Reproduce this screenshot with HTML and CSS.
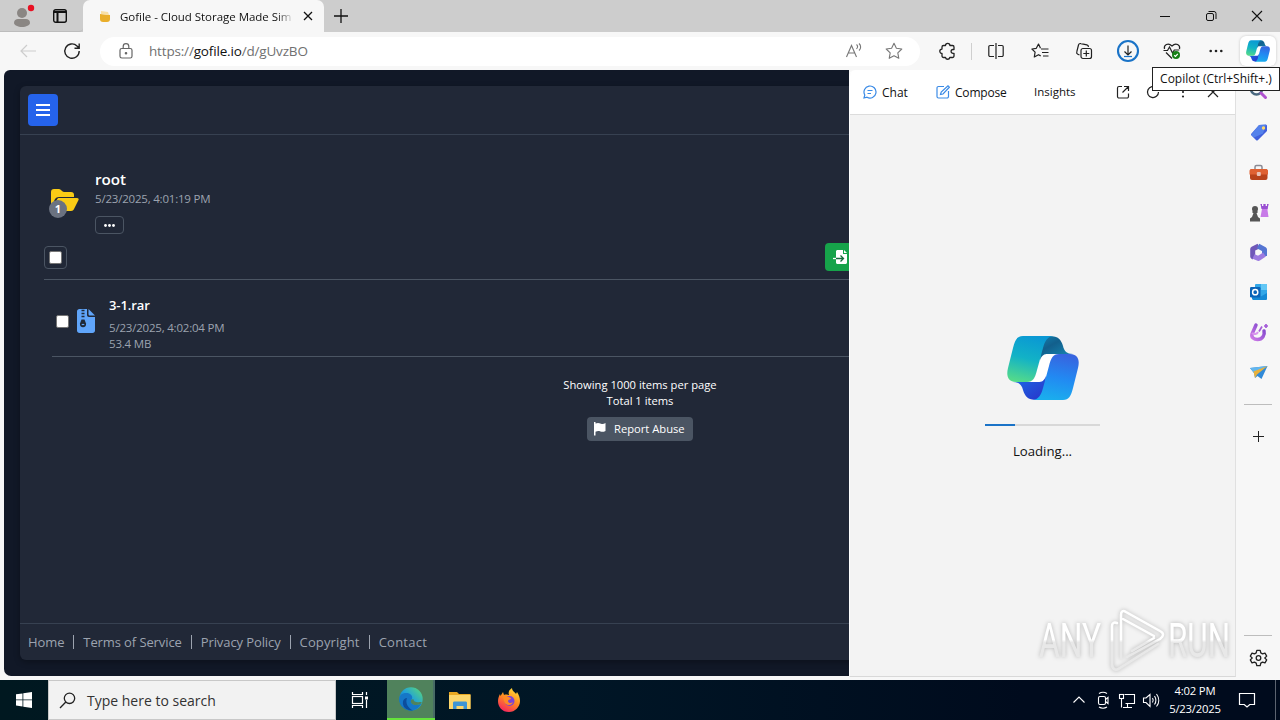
FILE: index.html
```
<!DOCTYPE html>
<html lang="en">
  <head>
    <meta charset="UTF-8" />
    <meta name="viewport" content="width=device-width, initial-scale=1.0" />
    <title>Gofile - Cloud Storage Made Simple</title>
    <link rel="stylesheet" href="styles.css" />
  </head>
  <body>
    <!-- shared gradients and the copilot symbol -->
    <svg class="defs" width="0" height="0">
      <defs>
        <linearGradient id="cp-left" x1="0.6" y1="0" x2="0.35" y2="1">
          <stop offset="0" stop-color="#0a98d4" />
          <stop offset="0.5" stop-color="#12b2c6" />
          <stop offset="1" stop-color="#52d98c" />
        </linearGradient>
        <linearGradient id="cp-right" x1="0.6" y1="0" x2="0.4" y2="1">
          <stop offset="0" stop-color="#3764df" />
          <stop offset="0.5" stop-color="#2289f2" />
          <stop offset="1" stop-color="#1aaeed" />
        </linearGradient>
        <linearGradient id="cp-top" x1="0" y1="0" x2="0.8" y2="1">
          <stop offset="0" stop-color="#1280ae" />
          <stop offset="0.4" stop-color="#125f8c" />
          <stop offset="1" stop-color="#1689b5" />
        </linearGradient>
        <linearGradient id="cp-bottom" x1="0" y1="0" x2="1" y2="1">
          <stop offset="0" stop-color="#1c6de8" />
          <stop offset="1" stop-color="#2932c8" />
        </linearGradient>
        <linearGradient id="violet" x1="0" y1="1" x2="1" y2="0">
          <stop offset="0" stop-color="#d07be8" />
          <stop offset="1" stop-color="#7842c9" />
        </linearGradient>
        <linearGradient id="edge-g" x1="0" y1="1" x2="1" y2="0">
          <stop offset="0" stop-color="#0c59a4" />
          <stop offset="0.5" stop-color="#1f9fdb" />
          <stop offset="1" stop-color="#5fdd71" />
        </linearGradient>
        <linearGradient id="fire" x1="0.8" y1="0" x2="0.3" y2="1">
          <stop offset="0" stop-color="#ffe03a" />
          <stop offset="0.5" stop-color="#ff8b20" />
          <stop offset="1" stop-color="#f5245f" />
        </linearGradient>
        <linearGradient id="mark" gradientUnits="userSpaceOnUse" x1="0" y1="0" x2="0" y2="70">
          <stop offset="0.48" stop-color="#fff" />
          <stop offset="0.52" stop-color="#e8e8e8" />
        </linearGradient>
        <symbol id="copilot" viewBox="0 0 72 64">
          <path fill="#fff" d="M36 17H49C45 20 43 26 42 30L38 46H23C28 44 29 40 30 34Z" />
          <path fill="url(#cp-top)" d="M42 0C52 0 54 4 56 10C57 15 60 18 66 18H41C37 18 35 19 33 24L34 8Z" />
          <path fill="url(#cp-bottom)" d="M30 64C20 64 18 60 16 54C15 49 12 46 6 46H31C35 46 37 45 39 40L38 56Z" />
          <path fill="url(#cp-left)" d="M16 0H46C40 1 38 5 36 12L30 34C28 42 26 46 20 46H9C1 46 -1 40 1 32L6 12C8 4 10 0 16 0Z" />
          <path fill="url(#cp-right)" d="M56 64H26C32 63 34 59 36 52L42 30C44 22 46 18 52 18H63C71 18 73 24 71 32L66 52C64 60 62 64 56 64Z" />
        </symbol>
      </defs>
    </svg>

    <header class="tabbar">
      <div class="tabbar-left">
        <svg class="profile" width="22" height="24" viewBox="0 0 22 24">
          <circle cx="9" cy="10" r="5" fill="#8a8683" />
          <path d="M1 20c0-3 2-4 4-4h8c2 0 4 1 4 4 0 2-4 4-8 4s-8-2-8-4z" fill="#8a8683" />
          <circle cx="18" cy="5" r="3.2" fill="#e81123" />
        </svg>
        <svg width="16" height="16" viewBox="0 0 16 16" fill="none" stroke="#111" stroke-width="1.4">
          <rect x="1.7" y="1.7" width="12.6" height="12.6" rx="2" />
          <path d="M2 4h12M5.5 4v10" stroke-width="2" />
        </svg>
      </div>
      <div class="tab">
        <svg width="12" height="12" viewBox="0 0 12 12">
          <path d="M1 4l10 1v4c0 2-1 3-3 3H4C2 12 1 11 1 9z" fill="#e9ae2b" />
          <path d="M2 1l7 1 1 3-8-1z" fill="#f8dfa4" />
        </svg>
        <span class="tab-title">Gofile - Cloud Storage Made Sim</span>
        <svg width="10" height="10" viewBox="0 0 10 10" stroke="#111" stroke-width="1.3">
          <path d="M1 1l8 8M9 1L1 9" />
        </svg>
      </div>
      <svg class="new-tab" width="14" height="14" viewBox="0 0 14 14" stroke="#111" stroke-width="1.3">
        <path d="M7 0v14M0 7h14" />
      </svg>
      <div class="window-buttons">
        <svg width="46" height="32" viewBox="0 0 46 32" stroke="#111"><path d="M18 16.5h10" /></svg>
        <svg width="46" height="32" viewBox="0 0 46 32" fill="none" stroke="#111">
          <rect x="18.5" y="13.5" width="7" height="7" rx="1.5" />
          <path d="M20.5 11.5H26a2 2 0 0 1 2 2V19" />
        </svg>
        <svg width="46" height="32" viewBox="0 0 46 32" stroke="#111" stroke-width="1.1">
          <path d="M18 11l10 10M28 11L18 21" />
        </svg>
      </div>
    </header>

    <nav class="toolbar">
      <svg class="back" width="16" height="14" viewBox="0 0 16 14" fill="none" stroke="#cdcdcd" stroke-width="1.2">
        <path d="M16 7H1M7 1L1 7l6 6" />
      </svg>
      <svg class="reload" width="18" height="18" viewBox="0 0 18 18" fill="none" stroke="#222" stroke-width="1.4">
        <path d="M16.2 9A7.2 7.2 0 1 1 14 3.9L16 6M16.2 1.5V6.2H11.5" />
      </svg>
      <div class="address">
        <svg width="14" height="16" viewBox="0 0 14 16" fill="none" stroke="#666" stroke-width="1.2">
          <rect x="1" y="5.5" width="12" height="9.5" rx="1.8" />
          <path d="M4.2 5.5V3.5a2.8 2.8 0 0 1 5.6 0v2" />
          <circle cx="7" cy="10.2" r="0.7" fill="#666" />
        </svg>
        <span class="url">https://<b>gofile.io</b>/d/gUvzBO</span>
        <svg class="read" width="18" height="16" viewBox="0 0 18 16" fill="none" stroke="#777" stroke-width="1.1">
          <path d="M1.5 14L6.500 2.500 11.500 14M3.300 10h6.400M11.500 1.500c1.300 1.200 1.300 3 0 4.500M14 .500c2.200 2 2.200 5 0 7" />
        </svg>
        <svg width="18" height="18" viewBox="0 0 18 18" fill="none" stroke="#777" stroke-width="1.1" stroke-linejoin="round">
          <path d="M9 1.300l2.400 5 5.400.7-4 3.800 1 5.500L9 13.700l-4.800 2.600 1-5.500-4-3.800 5.400-.7z" />
        </svg>
      </div>
      <div class="tools">
        <div class="tool">
          <svg width="18" height="18" viewBox="0 0 18 18" fill="none" stroke="#222" stroke-width="1.3" stroke-linejoin="round">
            <path d="M4.500 3.500h2a2.200 2.200 0 0 1 4.400 0h2.600a1.500 1.500 0 0 1 1.500 1.500v2.500h-1a1.800 1.800 0 0 0 0 3.800h1V14a1.500 1.500 0 0 1-1.500 1.500h-2.700a2.200 2.200 0 0 1-4.300 0h-2A1.500 1.500 0 0 1 3 14v-2.500a2.200 2.200 0 0 1 0-4.400V5a1.500 1.500 0 0 1 1.500-1.500z" />
          </svg>
        </div>
        <div class="tool-line"></div>
        <div class="tool">
          <svg width="16" height="16" viewBox="0 0 16 16" fill="none" stroke="#222" stroke-width="1.2">
            <path d="M6 2.500H2a1.200 1.200 0 0 0-1.200 1.200v8.600A1.200 1.200 0 0 0 2 13.500h4M10 2.500h4a1.200 1.200 0 0 1 1.200 1.200v8.600a1.200 1.200 0 0 1-1.200 1.200h-4M8 0v16" />
          </svg>
        </div>
        <div class="tool">
          <svg width="18" height="18" viewBox="0 0 18 18" fill="none" stroke="#222" stroke-width="1.2" stroke-linejoin="round">
            <path d="M9.500 6.300L7.500 2 5.300 6.300.9 7l3.200 3.200-.8 4.800 4.200-2.300 2.200 1.200M10 7h7.500M11 10.500h6.500M12 14h5.500" />
          </svg>
        </div>
        <div class="tool">
          <svg width="18" height="18" viewBox="0 0 18 18" fill="none" stroke="#222" stroke-width="1.2">
            <rect x="6" y="6.500" width="10.500" height="10" rx="2" />
            <path d="M11.300 8.500v6M8.300 11.500h6M4.500 13L2.800 12.200a2 2 0 0 1-1-2.500L3.500 3a2 2 0 0 1 2.400-1.400l6 1.200A2 2 0 0 1 13.400 5" />
          </svg>
        </div>
        <div class="tool">
          <svg width="24" height="24" viewBox="0 0 24 24" fill="none">
            <circle cx="12" cy="12" r="10" stroke="#1a73c7" stroke-width="2.100" />
            <path d="M12 6.500v9M8.500 12.500l3.500 3.500 3.500-3.500" stroke="#222" stroke-width="1.200" />
            <path d="M8 17.500h8" stroke="#1a73c7" stroke-width="1.200" />
          </svg>
        </div>
        <div class="tool">
          <svg width="18" height="18" viewBox="0 0 18 18" fill="none" stroke="#222" stroke-width="1.200">
            <path d="M1.500 7C.5 3 5 0 9 4c4-4 8.500-1 7.500 3M3 10.500l6 6M.5 8.500h4L6.500 5l3 6 1.800-3h5" />
            <circle cx="13" cy="13" r="4" fill="#188018" stroke="none" />
            <path d="M11.200 13.200l1.300 1.200 2.300-2.600" stroke="#fff" />
          </svg>
        </div>
        <div class="tool">
          <svg width="14" height="4" viewBox="0 0 14 4" fill="#222">
            <circle cx="1.700" cy="2" r="1.300" /><circle cx="7" cy="2" r="1.300" /><circle cx="12.300" cy="2" r="1.300" />
          </svg>
        </div>
      </div>
      <div class="copilot-button">
        <svg width="24" height="22"><use href="#copilot" /></svg>
        <div class="tooltip">Copilot (Ctrl+Shift+.)</div>
      </div>
    </nav>

    <div class="content">
      <main class="page">
        <div class="page-inner">
          <div class="card">
            <div class="card-header">
              <div class="menu">
                <svg width="14" height="12" viewBox="0 0 14 12" fill="#fff">
                  <path d="M0 0h14v2H0zM0 5h14v2H0zM0 10h14v2H0z" />
                </svg>
              </div>
            </div>
            <div class="card-body">
              <div class="folder">
                <div class="folder-icon">
                  <svg width="28" height="22" viewBox="0 0 28 22" fill="#facc15">
                    <path d="M0 19V3C0 1 1 0 3 0h5c2 0 3 3 5 3h7c2 0 3 1 3 3v2H8c-2 0-3 .8-4 2z" />
                    <path d="M1 21L6 10.500C6.500 9.500 7 9 8 9h18c1.500 0 2 1 1.500 2L23 20c-.5 1-1.500 2-3 2H2z" />
                  </svg>
                  <span class="count">1</span>
                </div>
                <div class="folder-info">
                  <div class="folder-name">root</div>
                  <div class="date">5/23/2025, 4:01:19 PM</div>
                  <div class="more">
                    <svg width="11" height="3" viewBox="0 0 11 3" fill="#fff">
                      <circle cx="1.500" cy="1.500" r="1.400" /><circle cx="5.500" cy="1.500" r="1.400" /><circle cx="9.500" cy="1.500" r="1.400" />
                    </svg>
                  </div>
                </div>
              </div>
              <div class="actions">
                <div class="select-all"><div class="check"></div></div>
                <div class="import">
                  <svg width="15" height="14" viewBox="0 0 15 14">
                    <path d="M3 1.500C3 .7 3.700 0 4.500 0H10v4h4v8.500c0 .8-.7 1.500-1.500 1.500h-8C3.700 14 3 13.300 3 12.500z" fill="#fff" />
                    <path d="M11 0l3 3h-3z" fill="#fff" />
                    <path d="M0 8.500h3" stroke="#fff" stroke-width="1.300" />
                    <path d="M3 8.500h7M7.500 5.500l3 3-3 3" fill="none" stroke="#166a3c" stroke-width="1.300" />
                  </svg>
                </div>
              </div>
              <div class="file">
                <div class="check"></div>
                <svg class="zip" width="18" height="24" viewBox="0 0 18 24">
                  <path d="M0 2.500C0 1 1 0 2.500 0H10v6c0 1.200.8 2 2 2h6v13.500c0 1.500-1 2.500-2.500 2.500h-13C1 24 0 23 0 21.500z" fill="#60a5fa" />
                  <path d="M11.500 0L18 6.500h-5c-1 0-1.500-.5-1.500-1.500z" fill="#60a5fa" />
                  <path d="M4.500 1.500h3M4.500 4.500h3M4.500 7.500h3" stroke="#1f2937" stroke-width="1.500" />
                  <path d="M4.500 10.500h3l1.500 4c.5 2-1 3.800-3 3.800S2.500 16.500 3 14.500z" fill="#1f2937" />
                  <path d="M4.700 15.500h2.600" stroke="#60a5fa" stroke-width="1.200" />
                </svg>
                <div class="file-info">
                  <div class="file-name">3-1.rar</div>
                  <div class="date">5/23/2025, 4:02:04 PM</div>
                  <div class="date size">53.4 MB</div>
                </div>
              </div>
              <div class="summary">
                <div>Showing 1000 items per page</div>
                <div>Total 1 items</div>
                <div class="report">
                  <svg width="12" height="14" viewBox="0 0 12 14" fill="#fff">
                    <path d="M0 0h1.500v1.500C4 .5 5 1 7 1.700c1.500.4 3 .2 4.500-.7v8c-2 1-3.500 1-5 .5-2-.6-3-.5-5 .2V13.500H0z" />
                  </svg>
                  <span>Report Abuse</span>
                </div>
              </div>
            </div>
            <div class="card-footer">
              <span>Home</span><i></i>
              <span>Terms of Service</span><i></i>
              <span>Privacy Policy</span><i></i>
              <span class="copyright">Copyright</span><i></i>
              <span class="contact">Contact</span>
            </div>
          </div>
        </div>
      </main>

      <section class="panel">
        <div class="panel-header">
          <svg width="14" height="14" viewBox="0 0 14 14" fill="none" stroke="#3b8be6" stroke-width="1.200">
            <path d="M1 13l.8-3A6 6 0 1 1 4 12.200zM4.500 5.500h5M4.500 8.500h3.500" />
          </svg>
          <span class="chat">Chat</span>
          <svg width="14" height="14" viewBox="0 0 14 14" fill="none" stroke="#3b8be6" stroke-width="1.200">
            <path d="M8 1.500H2.500A1.500 1.500 0 0 0 1 3v8.500A1.500 1.500 0 0 0 2.500 13H11a1.500 1.500 0 0 0 1.500-1.500V6M4.500 9.500l.7-2.500L12 .8l1.400 1.400L7 9z" />
          </svg>
          <span class="compose">Compose</span>
          <span class="insights">Insights</span>
          <div class="panel-icons">
            <svg width="30" height="16" viewBox="0 0 30 16" fill="none" stroke="#222" stroke-width="1.200">
              <path d="M14 2.500h-3A1.500 1.500 0 0 0 9.500 4v8.500A1.500 1.500 0 0 0 11 14h8a1.500 1.500 0 0 0 1.500-1.500V9.500M16 2.500h4.500V7M20.500 2.500l-6 6" />
            </svg>
            <svg width="30" height="16" viewBox="0 0 30 16" fill="none" stroke="#222" stroke-width="1.200">
              <path d="M20.500 8A5.500 5.500 0 1 1 18.500 3.800M20.500 2v4h-4" />
            </svg>
            <svg width="30" height="16" viewBox="0 0 30 16" fill="#222">
              <circle cx="15" cy="3.500" r="1.100" /><circle cx="15" cy="8" r="1.100" /><circle cx="15" cy="12.500" r="1.100" />
            </svg>
            <svg width="30" height="16" viewBox="0 0 30 16" stroke="#222" stroke-width="1.200">
              <path d="M10 3l10 10M20 3L10 13" />
            </svg>
          </div>
        </div>
        <div class="panel-body">
          <svg width="72" height="64"><use href="#copilot" /></svg>
          <div class="progress"><div class="progress-value"></div></div>
          <div class="loading">Loading...</div>
        </div>
      </section>

      <aside class="sidebar">
        <svg width="40" height="40" viewBox="0 0 40 40" fill="none">
          <circle cx="18.500" cy="17" r="5.500" stroke="#48677e" stroke-width="2.500" />
          <path d="M23 21l4.500 4.500" stroke="#b052d0" stroke-width="3" stroke-linecap="round" />
        </svg>
        <svg width="40" height="40" viewBox="0 0 40 40">
          <path d="M21 13l7-.5 1 1V19l-9 9c-.7.700-1.500.700-2 0l-4.500-4.500c-.7-.7-.7-1.300 0-2z" fill="#4160dc" />
          <path d="M21 13l7-.5-3 9-9 4-3-2.500z" fill="#639af5" opacity=".6" />
          <circle cx="25.500" cy="16" r="1.700" fill="#ffd968" />
        </svg>
        <svg width="40" height="40" viewBox="0 0 40 40">
          <path d="M17 17v-2c0-1 .7-1.500 1.500-1.500h4c.8 0 1.500.5 1.500 1.500v2" fill="none" stroke="#8a8a94" stroke-width="1.500" />
          <rect x="12" y="17" width="17.500" height="11" rx="2" fill="#b8431b" />
          <path d="M11.500 19c0-1 .7-2 2-2H28c1.300 0 2 1 2 2v3.500H11.500z" fill="#df6132" />
          <rect x="18.800" y="20" width="4" height="4" rx="1" fill="#e8c1b5" />
        </svg>
        <svg width="40" height="40" viewBox="0 0 40 40">
          <path d="M22.500 12h1.500v2h1.500v-2h2v2H29v-2h1.500l-1 6 1 7h-8l1.500-8z" fill="#c87be8" />
          <path d="M22.500 12h1.500v2h1.500v-2h2v2H29v-2h1.500l-1 5h-6z" fill="#9950d2" />
          <circle cx="17" cy="17" r="3" fill="#555" />
          <path d="M14.500 19h5v2h-1l1.500 4 2 1.500V29.500H12v-3L14 25l1.500-4h-1z" fill="#555" />
        </svg>
        <!-- hexagonal ring -->
        <svg width="40" height="40" viewBox="0 0 40 40" fill="none" stroke-width="5" stroke-linejoin="round">
          <path d="M16 25.500l-1.300-1V17l6-3" stroke="#6f58b8" />
          <path d="M20 14l6.500 3.500V24" stroke="#5575d2" />
          <path d="M26.500 22.500l-6 4-5-2" stroke="#9c7be0" />
        </svg>
        <svg width="40" height="40" viewBox="0 0 40 40">
          <rect x="17" y="12" width="12" height="13" rx="1" fill="#32a7e8" />
          <path d="M23 12h6v6h-6z" fill="#63c7f5" /><path d="M14 20l8 5 7-4v6.500l-1 .5H15l-1-1z" fill="#1489d5" />
          <rect x="12" y="15" width="10.500" height="10.500" rx="1.200" fill="#0a64b8" />
          <circle cx="17.200" cy="20.200" r="2.600" fill="none" stroke="#fff" stroke-width="1.500" />
        </svg>
        <svg width="40" height="40" viewBox="0 0 40 40" fill="none">
          <path d="M18 13l-4 9c-1 3.500 2 5.500 5.500 5.500 5 0 7.500-4.500 6.500-8.500" stroke="url(#violet)" stroke-width="3.500" stroke-linecap="round" />
          <path d="M24 14.500l-3 5M28 12v4M26 14h4" stroke="#a45bd8" stroke-width="1.700" />
          <path d="M14 21c2 2 5 1 6-1" stroke="#d995ed" stroke-width="2" />
        </svg>
        <svg width="40" height="40" viewBox="0 0 40 40">
          <path d="M12 16l17.500-2-6 13-4-3-2.500 2-1-5z" fill="#318ad8" />
          <path d="M12 16l17.500-2L16 21z" fill="#62b6ee" /><path d="M29.500 14l-14 5.500 1.500 6.500 2-3.500z" fill="#e9b13b" />
        </svg>
        <hr />
        <svg class="plus" width="40" height="40" viewBox="0 0 40 40" stroke="#222"><path d="M20.500 15v11M15 20.500h11" /></svg>
        <div class="sidebar-bottom">
          <hr />
          <svg width="40" height="40" viewBox="0 0 40 40" fill="none" stroke="#222" stroke-width="1.300" stroke-linejoin="round">
            <circle cx="20.500" cy="20" r="2.300" />
            <path d="M18.800 12.400h3.400l.6 2.500 1.700 1 2.500-.8 1.700 3-1.900 1.900 1.900 1.900-1.700 3-2.500-.8-1.700 1-.6 2.500h-3.400l-.6-2.500-1.700-1-2.500.8-1.700-3 1.900-1.900-1.900-1.900 1.700-3 2.500.8 1.700-1z" />
          </svg>
        </div>
      </aside>

      <svg class="watermark" width="200" height="74" viewBox="0 0 200 74">
        <text x="3" y="51" textLength="62" lengthAdjust="spacingAndGlyphs">ANY</text>
        <path d="M76 60V20c0-3 2-4 5-3" />
        <path d="M85 52V9c0-4 2-5 5-3l34 19c4 2 4 5 0 8L91 51" />
        <path d="M87 13l31 17M76 59c1 5 4 6 8 3l38-24M96 45l22-13" />
        <text x="132" y="51" textLength="62" lengthAdjust="spacingAndGlyphs">RUN</text>
      </svg>
    </div>

    <footer class="taskbar">
      <div class="start">
        <svg width="16" height="16" viewBox="0 0 16 16" fill="#fff">
          <path d="M0 2.300L6.500 1.400v6.100H0zM7.300 1.200L16 0v7.500H7.300zM0 8.300h6.500v6.200L0 13.600zM7.300 8.300H16V16l-8.700-1.300z" />
        </svg>
      </div>
      <div class="search">
        <svg width="17" height="17" viewBox="0 0 17 17" fill="none" stroke="#222" stroke-width="1.300">
          <circle cx="10.500" cy="6.300" r="5.200" /><path d="M6.800 10L1 16" />
        </svg>
        <span>Type here to search</span>
      </div>
      <div class="app task-view">
        <svg width="18" height="16" viewBox="0 0 18 16" fill="none" stroke="#fff" stroke-width="1.200">
          <path d="M1.500 0v2.500h10V0M1.500 16v-2.500h10V16M15.500 0v3M15.500 8v8" /><rect x="1.500" y="4.500" width="10" height="7" />
          <path d="M14 4.500h3v3h-3z" fill="#fff" stroke="none" />
        </svg>
      </div>
      <div class="app app-active">
        <svg width="24" height="24" viewBox="0 0 24 24">
          <circle cx="12" cy="12" r="11.700" fill="url(#edge-g)" />
          <path d="M.4 11C1 7 6 5 10 6.500c3 1 4 4 2.500 6-2 3 1 6 5 5.500 2 0 4-1 5-2-3 8-12 9-17.500 5C1 18.500 0 15 .4 11z" fill="#1677c7" />
          <path d="M8 11c-2 5 1 10 6 12.500C8 24 3 20 4 14.500c.5-2 2-3.500 4-3.500z" fill="#0c4d9c" />
          <path d="M12.500 12.500c-2 3 1 6 5 5.500 2 0 4-1 5-2 .8-1.500-1-1-3-.8-3 .2-5-1-5-3z" fill="#50825c" />
        </svg>
      </div>
      <div class="app">
        <svg width="22" height="19" viewBox="0 0 22 19">
          <path d="M0 1h8l2 2h11.500v15H0z" fill="#e9a821" /><path d="M0 4h21.500v14H0z" fill="#fcd66b" />
          <path d="M4 18v-6c0-1 .5-1.500 1.500-1.500h11c1 0 1.500.5 1.500 1.500v6h-3.500v-3h-7v3z" fill="#3d95d4" />
        </svg>
      </div>
      <div class="app">
        <svg width="22" height="24" viewBox="0 0 22 24">
          <path d="M11 24C4 24 0 19 0 13c0-3 1-5 2-7l.5 2L5 4l1 3c2-1 4 0 5 0-1-3 0-5 3-7 0 3 3 4 4 6l1-2c2 3 3 6 3 9 0 6-5 11-11 11z" fill="url(#fire)" />
          <circle cx="11.500" cy="13" r="5" fill="#7a43d7" />
          <path d="M5 8c2-1 4 0 5 1 2 0 3 1 3 2-1 0-3 1-3 2 0 2 3 3 5 1-1 4-8 4-9-1z" fill="#ff8a24" />
        </svg>
      </div>
      <div class="tray">
        <svg width="24" height="20" viewBox="0 0 24 20"><path d="M6.500 12.500L12 7l5.500 5.500" /></svg>
        <svg width="24" height="20" viewBox="0 0 24 20">
          <rect x="7.500" y="6.500" width="7" height="8" rx="1.500" /><path d="M14.500 9.500l2.500-2v6l-2.500-2M8 3.500c2.500-1.500 5.500-1.500 8 0M8 17c2.500 1.500 5.500 1.500 8 0" />
        </svg>
        <svg width="24" height="20" viewBox="0 0 24 20">
          <path d="M9.500 4.500h10v9h-9M8 17.500h9M12.500 14v3.500M6.500 9v8.500" /><rect x="4.500" y="4.500" width="4" height="4" />
        </svg>
        <svg width="24" height="20" viewBox="0 0 24 20">
          <path d="M4.500 8h2.500l4-3.500v12L7 12.500H4.500zM13.500 8c1 1.500 1 3 0 4.500M15.500 6c2 3 2 5.500 0 8.500M17.500 4c3 4 3 9 0 12.500" />
        </svg>
      </div>
      <div class="clock">
        <div class="time">4:02 PM</div>
        <div class="day">5/23/2025</div>
      </div>
      <svg class="notice" width="18" height="18" viewBox="0 0 18 18" fill="none" stroke="#fff" stroke-width="1.200">
        <path d="M1.500 2.500h15v11h-4.700L9 16l-2.800-2.500H1.500z" />
      </svg>
      <div class="show-desktop"></div>
    </footer>
  </body>
</html>
```
FILE: styles.css
```
* {
  margin: 0;
  padding: 0;
  box-sizing: border-box;
}

body {
  width: 1280px;
  height: 720px;
  overflow: hidden;
  display: flex;
  flex-direction: column;
  background-color: #f7f7f7;
  color: #111;
  font-family: "Open Sans", "Noto Sans", sans-serif;
  font-size: 12px;
  white-space: nowrap;
}

svg {
  display: block;
  flex-shrink: 0;
}

.defs {
  position: absolute;
}

/* tab bar */
.tabbar {
  height: 32px;
  display: flex;
  align-items: center;
  background-color: #cdcdcd;
}

.tabbar-left {
  width: 83px;
  height: 32px;
  padding-left: 13px;
  display: flex;
  align-items: center;
  gap: 17px;
  border-bottom: 1px solid #bcbcbc;
  border-bottom-right-radius: 4px;
}

.profile {
  margin-top: -2px;
}

.tab {
  width: 241px;
  height: 32px;
  padding: 0 11px 0 16px;
  display: flex;
  align-items: center;
  background-color: #f7f7f7;
  border-radius: 7px 7px 0 0;
}

.tab-title {
  width: 174px;
  margin: 0 9px 0 9px;
  font-size: 11.5px;
  letter-spacing: -0.03px;
  -webkit-mask-image: linear-gradient(90deg, #000 90%, transparent);
  mask-image: linear-gradient(90deg, #000 90%, transparent);
}

.new-tab {
  margin-left: 10px;
}

.window-buttons {
  margin-left: auto;
  display: flex;
}

/* toolbar */
.toolbar {
  height: 38px;
  display: flex;
  align-items: center;
  background-color: #f7f7f7;
}

.back {
  margin-left: 20px;
}

.reload {
  margin-left: 27px;
}

.address {
  width: 820px;
  height: 29px;
  margin-left: 19px;
  padding: 0 17px 0 19px;
  display: flex;
  align-items: center;
  background-color: #fff;
  border-radius: 15px;
}

.url {
  margin-left: 16px;
  color: #707070;
  font-size: 13.5px;
  letter-spacing: -0.17px;
}

.url b {
  color: #111;
  font-weight: 400;
}

.read {
  margin-left: auto;
  margin-right: 22px;
}

.tools {
  margin-left: 6px;
  display: flex;
  align-items: center;
}

.tool {
  width: 44px;
  display: flex;
  justify-content: center;
}

.tool-line {
  width: 1px;
  height: 17px;
  margin: 0 2px 0 1px;
  background-color: #cfcfcf;
}

.copilot-button {
  position: relative;
  width: 36px;
  height: 30px;
  margin-left: 2px;
  display: flex;
  align-items: center;
  justify-content: center;
  background-color: #fff;
  border-radius: 6px;
  box-shadow: 0 0 3px rgba(0, 0, 0, 0.2);
}

.tooltip {
  position: absolute;
  top: 31px;
  right: -4px;
  z-index: 5;
  width: 128px;
  height: 24px;
  border: 1px solid #222;
  background-color: #fff;
  line-height: 22px;
  text-align: center;
  font-size: 12px;
}

/* browser content */
.content {
  position: relative;
  height: 610px;
  display: flex;
}

.page {
  width: 845px;
  height: 606px;
  margin-left: 4px;
  overflow: hidden;
  background-color: #111827;
  border-radius: 6px 0 0 7px;
}

.page-inner {
  width: 1272px;
  height: 606px;
  padding: 16px;
}

.card {
  height: 574px;
  display: flex;
  flex-direction: column;
  background-color: #212837;
  border-radius: 6px;
  box-shadow: 0 2px 6px rgba(0, 0, 0, 0.3);
}

.card-header {
  height: 49px;
  padding: 8px;
  border-bottom: 1px solid #374151;
}

.menu {
  width: 30px;
  height: 32px;
  display: flex;
  align-items: center;
  justify-content: center;
  background-color: #2563eb;
  border-radius: 4px;
}

.card-body {
  flex: 1;
  padding: 34px 24px 0;
}

.folder {
  height: 69px;
  display: flex;
}

.folder-icon {
  position: relative;
  width: 43px;
  padding: 20px 0 0 7px;
}

.count {
  position: absolute;
  top: 31px;
  left: 5px;
  width: 18px;
  height: 18px;
  border-radius: 50%;
  background-color: #6b7280;
  color: #fff;
  font-size: 11px;
  font-weight: 700;
  line-height: 18px;
  text-align: center;
}

.folder-info {
  padding-left: 8px;
}

.folder-name {
  height: 22px;
  color: #fff;
  font-size: 15.2px;
  font-weight: 600;
  line-height: 20px;
}

.date {
  height: 16px;
  color: #9ca3af;
  font-size: 11.5px;
  letter-spacing: -0.2px;
  line-height: 16px;
}

.more {
  width: 29px;
  height: 18px;
  margin-top: 9px;
  display: flex;
  align-items: center;
  justify-content: center;
  border: 1px solid #4b5563;
  border-radius: 4px;
}

.actions {
  height: 42px;
  padding-top: 5px;
  display: flex;
  border-bottom: 1px solid #4b5563;
}

.select-all {
  width: 23px;
  height: 23px;
  margin-top: 3px;
  display: flex;
  align-items: center;
  justify-content: center;
  border: 1px solid #4b5563;
  border-radius: 4px;
}

.check {
  width: 13px;
  height: 13px;
  background-color: #fff;
  border: 1px solid #767676;
  border-radius: 2px;
}

.import {
  width: 60px;
  height: 28px;
  margin-left: 758px;
  padding: 7px 8px;
  background-color: #16a34a;
  border-radius: 4px;
}

.file {
  height: 69px;
  margin: 8px 8px 0;
  padding: 6px 4px 0;
  display: flex;
  border-bottom: 1px solid #4b5563;
}

.file .check {
  margin-top: 21px;
}

.zip {
  margin: 15px 14px 0 8px;
}

.file-info {
  padding-top: 2px;
}

.file-name {
  height: 18px;
  margin-bottom: 6px;
  color: #fff;
  font-size: 13px;
  font-weight: 600;
  letter-spacing: -0.1px;
  line-height: 18px;
}

.summary {
  padding-top: 20px;
  color: #fff;
  font-size: 11.2px;
  line-height: 16px;
  display: flex;
  flex-direction: column;
  align-items: center;
}

.report {
  width: 106px;
  height: 24px;
  margin-top: 8px;
  padding-left: 7px;
  display: flex;
  align-items: center;
  gap: 8px;
  background-color: #4b5563;
  border-radius: 4px;
}

.card-footer {
  height: 37px;
  padding-left: 8px;
  display: flex;
  align-items: center;
  border-top: 1px solid #374151;
  color: #9ca3af;
  font-size: 13px;
  letter-spacing: -0.1px;
}

.card-footer i {
  width: 1px;
  height: 14px;
  margin: 0 9px;
  background-color: #9ca3af;
}

.card-footer .copyright {
  letter-spacing: 0.15px;
}

.card-footer .contact {
  letter-spacing: 0.25px;
}

/* copilot panel */
.panel {
  width: 387px;
  height: 607px;
  display: flex;
  flex-direction: column;
  background-color: #f3f3f3;
  border-right: 1px solid #e0e0e0;
  border-bottom: 1px solid #d8d8d8;
  border-left: 1px solid #fff;
  border-radius: 6px 0 0 0;
  overflow: hidden;
}

.panel-header {
  height: 45px;
  padding: 0 7px 0 13px;
  display: flex;
  align-items: center;
  background-color: #fff;
  border-bottom: 1px solid #dcdcdc;
}

.chat {
  width: 54px;
  margin-left: 5px;
}

.compose {
  width: 79px;
  margin-left: 5px;
  letter-spacing: -0.2px;
}

.insights {
  padding-bottom: 2px;
  font-size: 11.5px;
}

.panel-icons {
  margin-left: auto;
  display: flex;
}

.panel-body {
  flex: 1;
  padding-top: 221px;
  display: flex;
  flex-direction: column;
  align-items: center;
}

.progress {
  width: 115px;
  height: 2px;
  margin-top: 24px;
  background-color: #d8d8d8;
}

.progress-value {
  width: 30px;
  height: 2px;
  background-color: #1a73c7;
}

.loading {
  margin-top: 15px;
  font-size: 13.2px;
  line-height: 20px;
}

.sidebar {
  width: 43px;
  height: 610px;
  padding-top: 2px;
  display: flex;
  flex-direction: column;
  align-items: center;
}

.sidebar hr {
  width: 28px;
  height: 1px;
  flex-shrink: 0;
  border: none;
  background-color: #bdbdbd;
}

.sidebar > hr {
  margin-top: 12px;
}

.plus {
  margin-top: 11px;
}

.sidebar-bottom {
  margin-top: auto;
  display: flex;
  flex-direction: column;
  align-items: center;
  gap: 2px;
  padding-bottom: 2px;
}

.watermark {
  position: absolute;
  top: 536px;
  left: 1036px;
  fill: url(#mark);
  filter: drop-shadow(0 0 2px rgba(0, 0, 0, 0.25));
  font-family: Roboto, sans-serif;
  font-size: 48px;
  font-weight: 400;
}

.watermark path {
  fill: none;
  stroke: url(#mark);
  stroke-width: 2.5px;
  stroke-linecap: round;
}

/* taskbar */
.taskbar {
  height: 40px;
  display: flex;
  align-items: center;
  background-image: linear-gradient(90deg, #001820, #001626 45%, #000b1d 80%);
  color: #fff;
}

.start {
  width: 48px;
  display: flex;
  justify-content: center;
}

.search {
  width: 288px;
  height: 40px;
  padding-left: 10px;
  display: flex;
  align-items: center;
  gap: 11px;
  background-color: #f2f2f2;
  border: 1px solid #c8c8c8;
  color: #333;
  font-size: 14px;
}

.app {
  width: 49px;
  height: 40px;
  display: flex;
  align-items: center;
  justify-content: center;
}

.task-view {
  width: 48px;
}

.app-active {
  width: 48px;
  margin: 0 0 0 3px;
  background-color: #50825c;
  border-bottom: 2px solid #65e33b;
  box-shadow: inset -2px 0 #476b65;
}

.tray {
  margin-left: auto;
  display: flex;
}

.tray svg {
  fill: none;
  stroke: #fff;
  stroke-width: 1.1px;
}

.clock {
  width: 64px;
  text-align: center;
  font-size: 11.3px;
  letter-spacing: -0.2px;
  line-height: 18px;
}

.notice {
  margin-left: 11px;
}

.show-desktop {
  width: 5px;
  height: 40px;
  margin-left: 19px;
  border-left: 1px solid #5c6470;
}
```
